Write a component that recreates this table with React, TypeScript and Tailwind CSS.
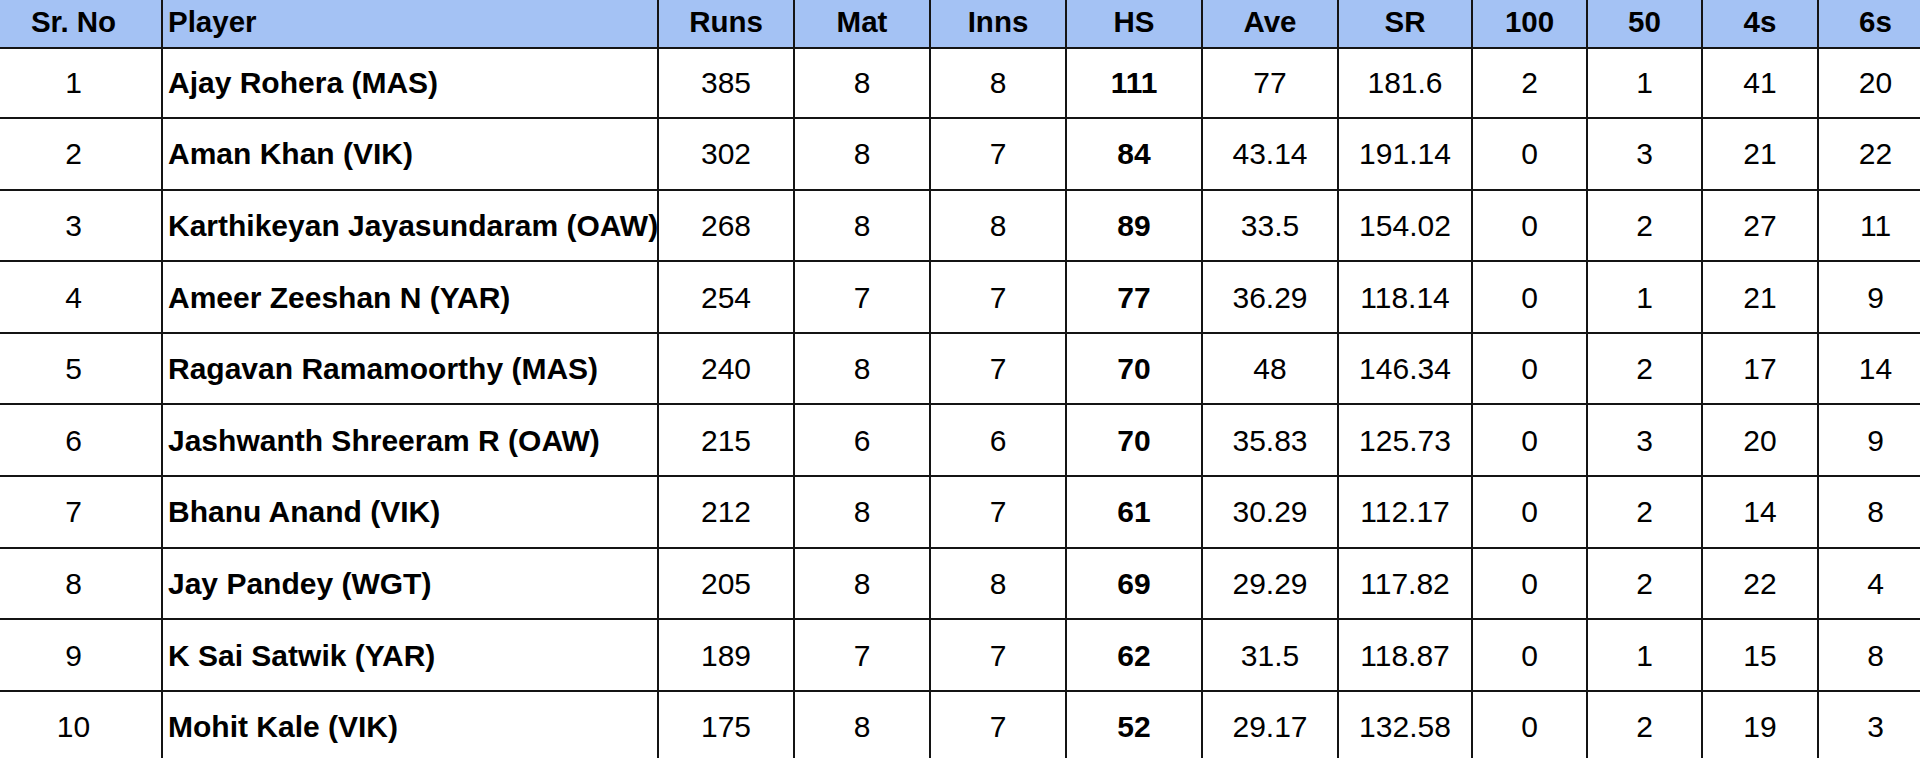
const headers = ["Sr. No", "Player", "Runs", "Mat", "Inns", "HS", "Ave", "SR", "100", "50", "4s", "6s"];

const rows: (string | number)[][] = [
  [1, "Ajay Rohera (MAS)", 385, 8, 8, 111, "77", "181.6", 2, 1, 41, 20],
  [2, "Aman Khan (VIK)", 302, 8, 7, 84, "43.14", "191.14", 0, 3, 21, 22],
  [3, "Karthikeyan Jayasundaram (OAW)", 268, 8, 8, 89, "33.5", "154.02", 0, 2, 27, 11],
  [4, "Ameer Zeeshan N (YAR)", 254, 7, 7, 77, "36.29", "118.14", 0, 1, 21, 9],
  [5, "Ragavan Ramamoorthy (MAS)", 240, 8, 7, 70, "48", "146.34", 0, 2, 17, 14],
  [6, "Jashwanth Shreeram R (OAW)", 215, 6, 6, 70, "35.83", "125.73", 0, 3, 20, 9],
  [7, "Bhanu Anand (VIK)", 212, 8, 7, 61, "30.29", "112.17", 0, 2, 14, 8],
  [8, "Jay Pandey (WGT)", 205, 8, 8, 69, "29.29", "117.82", 0, 2, 22, 4],
  [9, "K Sai Satwik (YAR)", 189, 7, 7, 62, "31.5", "118.87", 0, 1, 15, 8],
  [10, "Mohit Kale (VIK)", 175, 8, 7, 52, "29.17", "132.58", 0, 2, 19, 3],
];

const grid =
  "grid grid-cols-[163px_496px_136px_136px_136px_136px_136px_134px_115px_115px_116px_115px]";

const cellClass = (i: number) => {
  if (i === 0) return "flex items-center justify-center pr-[14px] border-r-2 border-b-2 border-[#141414]";
  if (i === 1) return "flex items-center pl-[5px] whitespace-nowrap border-r-2 border-b-2 border-[#141414]";
  return "flex items-center justify-center border-r-2 border-b-2 border-[#141414]";
};

const App = () => {
  return (
    <div className="w-[1920px] h-[758px] overflow-hidden bg-white font-['Liberation_Sans',Arial,sans-serif] text-black">
      <div className="w-[1935px]">
        {/* Header */}
        <div className={`${grid} h-[47.5px] bg-[#a4c2f4]`}>
          {headers.map((h, i) => (
            <div key={h} className={`${cellClass(i)} text-[29.5px] font-bold pb-[3px]`}>
              {h}
            </div>
          ))}
        </div>

        {/* Rows */}
        {rows.map((r) => (
          <div key={r[0]} className={`${grid} h-[71.6px]`}>
            {r.map((v, i) => (
              <div
                key={i}
                className={`${cellClass(i)} text-[30px] ${i === 1 || i === 5 ? "font-bold" : "font-normal"}`}
              >
                {v}
              </div>
            ))}
          </div>
        ))}
      </div>
    </div>
  );
};

export default App;
